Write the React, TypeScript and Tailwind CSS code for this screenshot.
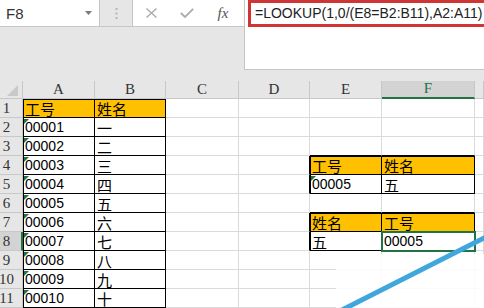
import React from 'react';

const COLS = ['A', 'B', 'C', 'D', 'E', 'F', 'G'];
const NAMES = ['一', '二', '三', '四', '五', '六', '七', '八', '九', '十'];

type Cell = { text: string; cjk?: boolean; orange?: boolean; tri?: boolean; table?: boolean; top?: boolean; left?: boolean };

// build the sheet contents: row -> col -> cell
const sheet: Record<string, Cell> = {};
sheet['A1'] = { text: '工号', cjk: true, orange: true, table: true, top: true, left: true };
sheet['B1'] = { text: '姓名', cjk: true, orange: true, table: true, top: true };
for (let i = 0; i < 10; i++) {
  sheet['A' + (i + 2)] = { text: '0000' + (i + 1), tri: true, table: true, left: true };
  if (i === 9) sheet['A11'].text = '00010';
  sheet['B' + (i + 2)] = { text: NAMES[i], cjk: true, table: true };
}
sheet['E4'] = { text: '工号', cjk: true, orange: true, table: true, top: true, left: true };
sheet['F4'] = { text: '姓名', cjk: true, orange: true, table: true, top: true };
sheet['E5'] = { text: '00005', tri: true, table: true, left: true };
sheet['F5'] = { text: '五', cjk: true, table: true };
sheet['E7'] = { text: '姓名', cjk: true, orange: true, table: true, top: true, left: true };
sheet['F7'] = { text: '工号', cjk: true, orange: true, table: true, top: true };
sheet['E8'] = { text: '五', cjk: true, table: true, left: true };
sheet['F8'] = { text: '00005', table: true };

function shadowFor(c?: Cell) {
  if (!c) return '';
  if (c.top && c.left) return 'shadow-[inset_1px_1px_0_#000]';
  if (c.top) return 'shadow-[inset_0_1px_0_#000]';
  if (c.left) return 'shadow-[inset_1px_0_0_#000]';
  return '';
}

export default function App() {
  const rows = Array.from({ length: 11 }, (_, i) => i + 1);

  return (
    <div className="relative w-[484px] h-[308px] overflow-hidden bg-[#e6e6e6] font-['Liberation_Sans',sans-serif]">
      {/* name box + formula bar */}
      <div className="flex h-[70px]">
        <div className="w-[244px] flex flex-col">
          <div className="flex h-[27px] border-b border-[#c6c6c6]">
            <div className="w-[100px] bg-white border-r border-[#c6c6c6] flex items-center justify-between pl-[6px] pr-[7px]">
              <span className="text-[15px] text-[#333] leading-none">F8</span>
              <svg width="7" height="4" viewBox="0 0 7 4">
                <path d="M0 0 L7 0 L3.5 4 Z" fill="#7a7a7a" />
              </svg>
            </div>
            <div className="w-[32px] flex items-center justify-center">
              <svg width="3" height="11" viewBox="0 0 3 11">
                <rect x="0.5" y="0" width="2" height="2" fill="#b5b5b5" />
                <rect x="0.5" y="4.5" width="2" height="2" fill="#b5b5b5" />
                <rect x="0.5" y="9" width="2" height="2" fill="#b5b5b5" />
              </svg>
            </div>
            <div className="flex-1 bg-white border-l border-[#c6c6c6] flex items-center">
              <span className="w-[36px] flex justify-center">
                <svg width="11" height="10" viewBox="0 0 11 10">
                  <path d="M0.5 0.5 L10.5 9.5 M10.5 0.5 L0.5 9.5" stroke="#acacac" strokeWidth="1.4" fill="none" />
                </svg>
              </span>
              <span className="w-[36px] flex justify-center">
                <svg width="14" height="10" viewBox="0 0 14 10">
                  <path d="M0.8 5 L5 9 L13.2 0.8" stroke="#acacac" strokeWidth="1.8" fill="none" />
                </svg>
              </span>
              <span className="w-[36px] flex justify-center font-['Liberation_Serif',serif] italic text-[15px] text-[#555] leading-none">
                fx
              </span>
            </div>
          </div>
        </div>
        <div className="flex-1 bg-white border-l border-b border-[#c6c6c6]">
          <div className="h-[27px] ml-[3px] -mr-[6px] border-[3px] border-[#cf3535] flex items-center pl-[4px] pb-[1px]">
            <span className="text-[14px] text-[#222] whitespace-nowrap leading-none">=LOOKUP(1,0/(E8=B2:B11),A2:A11)</span>
          </div>
        </div>
      </div>
      <div className="h-[11px]" />

      {/* sheet grid */}
      <div className="grid grid-cols-[23px_72px_71px_73px_71px_72px_93px_1fr] grid-rows-[18px_repeat(11,19px)]">
        {/* corner */}
        <div className="bg-[#e6e6e6] border-r border-b border-[#c8c8c8] flex items-end pl-[7px] pb-[2px]">
          <svg width="11" height="11" viewBox="0 0 11 11">
            <path d="M11 0 L11 11 L0 11 Z" fill="#c9c9c9" />
          </svg>
        </div>
        {COLS.map((c) => (
          <div
            key={c}
            className={
              c === 'F'
                ? 'bg-[#d3d3d3] border-r border-[#c8c8c8] border-b-2 border-b-[#217346] flex items-end justify-center font-["Liberation_Serif",serif] text-[15px] leading-[17px] text-[#217346]'
                : 'bg-[#e6e6e6] border-r border-b border-[#c8c8c8] flex items-end justify-center font-["Liberation_Serif",serif] text-[15px] leading-[17px] text-[#333]'
            }
          >
            {c === 'G' ? '' : c}
          </div>
        ))}

        {rows.map((r) => (
          <React.Fragment key={r}>
            <div
              className={
                r === 8
                  ? 'bg-[#d3d3d3] border-b border-[#c8c8c8] border-r-2 border-r-[#217346] flex items-end justify-center pr-[8px] font-["Liberation_Serif",serif] text-[15px] leading-[18px] text-[#333]'
                  : 'bg-[#e6e6e6] border-r border-b border-[#c8c8c8] flex items-end justify-center pr-[9px] font-["Liberation_Serif",serif] text-[15px] leading-[18px] text-[#333]'
              }
            >
              {r}
            </div>
            {COLS.map((c) => {
              const cell = sheet[c + r];
              const below = sheet[c + (r + 1)];
              const right = sheet[COLS[COLS.indexOf(c) + 1] + r];
              const edge =
                cell?.table
                  ? 'border-black'
                  : below?.top && right?.left
                  ? 'border-r-black border-b-black'
                  : below?.top
                  ? 'border-r-[#dadada] border-b-black'
                  : right?.left
                  ? 'border-r-black border-b-[#dadada]'
                  : 'border-[#dadada]';
              return (
                <div
                  key={c}
                  className={`relative flex items-end overflow-hidden pl-[2px] border-r border-b ${edge} ${shadowFor(cell)} ${
                    cell?.orange ? 'bg-[#ffc000]' : 'bg-white'
                  }`}
                >
                  {cell?.tri && (
                    <svg className="absolute left-px top-px" width="5" height="5" viewBox="0 0 5 5">
                      <path d="M0 0 L5 0 L0 5 Z" fill="#217346" />
                    </svg>
                  )}
                  {cell && (
                    <span
                      className={
                        cell.cjk
                          ? "font-['Noto_Sans_CJK_SC',sans-serif] text-[15px] leading-[17px] text-black"
                          : 'text-[14px] leading-[17px] text-black'
                      }
                    >
                      {cell.text}
                    </span>
                  )}
                </div>
              );
            })}
          </React.Fragment>
        ))}
      </div>

      {/* selection frame around F8 */}
      <div className="absolute left-[381px] top-[231px] w-[95px] h-[21px] border-2 border-[#217346]" />

      {/* watermark */}
      <div className="absolute left-[336px] top-[254px] w-[148px] h-[54px] bg-white/90" />
      <svg className="absolute inset-0 pointer-events-none" width="484" height="308" viewBox="0 0 484 308">
        <path d="M340 311 L488 236" stroke="#3fa7dc" strokeWidth="5" fill="none" />
      </svg>
    </div>
  );
}
